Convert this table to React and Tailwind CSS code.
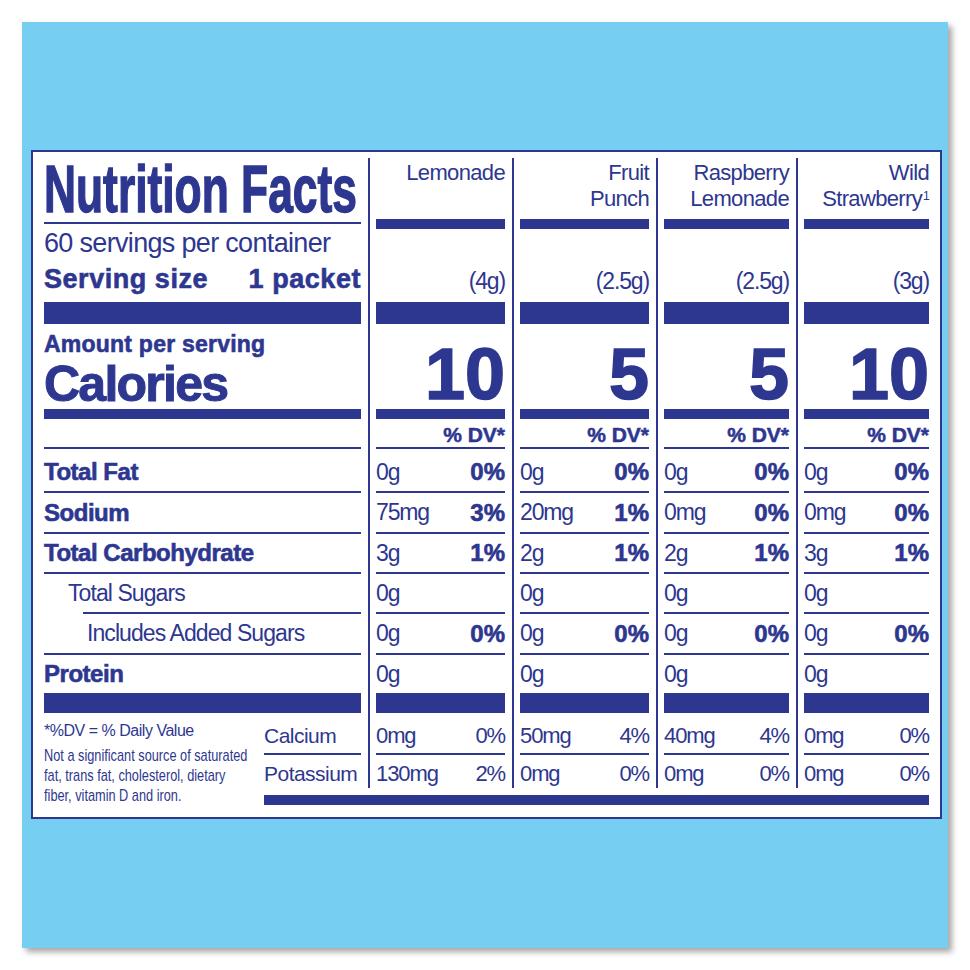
import React from 'react';

const columns = [
  {
    name: ['Lemonade'],
    size: '(4g)',
    cal: '10',
    rows: [['0g', '0%'], ['75mg', '3%'], ['3g', '1%'], ['0g', ''], ['0g', '0%'], ['0g', '']],
    minerals: [['0mg', '0%'], ['130mg', '2%']],
  },
  {
    name: ['Fruit', 'Punch'],
    size: '(2.5g)',
    cal: '5',
    rows: [['0g', '0%'], ['20mg', '1%'], ['2g', '1%'], ['0g', ''], ['0g', '0%'], ['0g', '']],
    minerals: [['50mg', '4%'], ['0mg', '0%']],
  },
  {
    name: ['Raspberry', 'Lemonade'],
    size: '(2.5g)',
    cal: '5',
    rows: [['0g', '0%'], ['0mg', '0%'], ['2g', '1%'], ['0g', ''], ['0g', '0%'], ['0g', '']],
    minerals: [['40mg', '4%'], ['0mg', '0%']],
  },
  {
    name: ['Wild', 'Strawberry'],
    sup: '1',
    size: '(3g)',
    cal: '10',
    rows: [['0g', '0%'], ['0mg', '0%'], ['3g', '1%'], ['0g', ''], ['0g', '0%'], ['0g', '']],
    minerals: [['0mg', '0%'], ['0mg', '0%']],
  },
];

const nutrients = [
  { label: 'Total Fat', bold: true, h: 'h-[42px] leading-[46px]', pad: '' },
  { label: 'Sodium', bold: true, h: 'h-[39px] leading-[39px]', pad: '' },
  { label: 'Total Carbohydrate', bold: true, h: 'h-[38px] leading-[38px]', pad: '' },
  { label: 'Total Sugars', bold: false, h: 'h-[38px] leading-[38px]', pad: 'pl-[24px]' },
  { label: 'Includes Added Sugars', bold: false, h: 'h-[39px] leading-[39px]', pad: 'pl-[43px]' },
  { label: 'Protein', bold: true, h: 'h-[38px] leading-[38px]', pad: '' },
];

const gridTop = 'grid grid-cols-[335px_144px_144px_140px_144px]';
const gridBottom = 'grid grid-cols-[104px_144px_144px_140px_144px]';
const valCell = [
  'border-l-2 border-[#2e3790] pl-[6px] pr-[7px]',
  'border-l-2 border-[#2e3790] pl-[6px] pr-[7px]',
  'border-l-2 border-[#2e3790] pl-[6px] pr-[7px]',
  'border-l-2 border-[#2e3790] pl-[6px] pr-[11px]',
];

const Bar = ({ className = '' }) => <div className={`h-full bg-[#2e3790] ${className}`} />;

const Row = ({ grid = gridTop, leftPad = 'pl-[11px] pr-[7px]', className = '', left, cell }) => (
  <div className={grid}>
    <div className={`${leftPad} ${className}`}>{left}</div>
    {columns.map((c, i) => (
      <div key={i} className={`${valCell[i]} ${className}`}>
        {cell(c, i)}
      </div>
    ))}
  </div>
);

const App = () => {
  return (
    <div className="h-[970px] w-[970px] bg-white pl-[22px] pt-[22px] font-['Liberation_Sans',Arial,sans-serif]">
      <div className="h-[926px] w-[926px] bg-[#76cef3] pl-[9px] pt-[128px] shadow-[4px_4px_6px_rgba(0,0,0,0.35)]">
        <div className="w-[911px] border-2 border-[#2e3790] bg-white pb-[11px] pt-[6px] text-[#2e3790]">
          {/* header */}
          <Row
            className="h-[144px]"
            left={
              <>
                <div className="h-[62px] whitespace-nowrap text-[67px] font-bold leading-[62px]">
                  <span className="inline-block origin-left scale-x-[0.662] [-webkit-text-stroke:1.5px_#2e3790]">
                    Nutrition Facts
                  </span>
                </div>
                <div className="mt-[2px] h-[2px] bg-[#2e3790]" />
                <div className="whitespace-nowrap text-[27px] leading-[39px] tracking-[-0.025em]">
                  60 servings per container
                </div>
                <div className="flex justify-between whitespace-nowrap text-[27px] font-bold leading-[32px] tracking-[0.02em] [-webkit-text-stroke:0.6px_#2e3790]">
                  <span>Serving size</span>
                  <span>1 packet</span>
                </div>
              </>
            }
            cell={(c) => (
              <div className="flex flex-col">
                <div className="h-[61px] pt-[2px] text-right text-[22px] leading-[26px] tracking-[-0.03em]">
                  {c.name.map((n, j) => (
                    <div key={j}>
                      {n}
                      {c.sup && j === c.name.length - 1 && (
                        <sup className="ml-[1px] text-[12px]">{c.sup}</sup>
                      )}
                    </div>
                  ))}
                </div>
                <div className="h-[10px] bg-[#2e3790]" />
                <div className="mt-[40px] text-right text-[23px] leading-[24px] tracking-[-0.05em]">{c.size}</div>
              </div>
            )}
          />
          <Row className="h-[22px]" left={<Bar />} cell={() => <Bar />} />

          {/* calories */}
          <Row
            className="h-[85px]"
            left={
              <>
                <div className="whitespace-nowrap text-[23px] font-bold leading-[40px] tracking-[0.01em] [-webkit-text-stroke:0.6px_#2e3790]">
                  Amount per serving
                </div>
                <div className="whitespace-nowrap text-[50px] font-bold leading-[40px] tracking-[-0.035em] [-webkit-text-stroke:1px_#2e3790]">
                  Calories
                </div>
              </>
            }
            cell={(c) => (
              <div className="pt-[14px] text-right text-[72px] font-bold leading-[72px] [-webkit-text-stroke:1.5px_#2e3790]">
                {c.cal}
              </div>
            )}
          />
          <Row className="h-[10px]" left={<Bar />} cell={() => <Bar />} />

          {/* % DV */}
          <Row
            className="h-[28px]"
            left={null}
            cell={() => (
              <div className="text-right text-[21px] font-bold leading-[32px] [-webkit-text-stroke:0.5px_#2e3790]">
                % DV*
              </div>
            )}
          />
          <Row className="h-[2px]" left={<Bar />} cell={() => <Bar />} />

          {nutrients.map((n, k) => (
            <React.Fragment key={n.label}>
              <Row
                className={n.h}
                left={
                  <div
                    className={`${n.pad} whitespace-nowrap ${
                      n.bold
                        ? 'text-[24px] font-bold tracking-[-0.02em] [-webkit-text-stroke:0.6px_#2e3790]'
                        : 'text-[23px] tracking-[-0.04em]'
                    }`}
                  >
                    {n.label}
                  </div>
                }
                cell={(c) => (
                  <div className="flex justify-between whitespace-nowrap">
                    <span className="text-[23px] tracking-[-0.05em]">{c.rows[k][0]}</span>
                    <span className="text-[24px] font-bold [-webkit-text-stroke:0.6px_#2e3790]">{c.rows[k][1]}</span>
                  </div>
                )}
              />
              {k < nutrients.length - 1 ? (
                <Row
                  className="h-[2px]"
                  left={<Bar className={k === 3 ? 'ml-[39px]' : ''} />}
                  cell={() => <Bar />}
                />
              ) : (
                <Row className="h-[20px]" left={<Bar />} cell={() => <Bar />} />
              )}
            </React.Fragment>
          ))}

          {/* footnote + minerals */}
          <div className="flex">
            <div className="w-[231px] shrink-0 pl-[11px] pt-[8px]">
              <div className="whitespace-nowrap text-[16px] leading-[20px] tracking-[-0.03em]">*%DV = % Daily Value</div>
              <div className="mt-[5px] w-[280px] origin-top-left scale-x-[0.75] whitespace-nowrap text-[17px] leading-[20px]">
                Not a significant source of saturated
                <br />
                fat, trans fat, cholesterol, dietary
                <br />
                fiber, vitamin D and iron.
              </div>
            </div>
            <div className="w-[676px] shrink-0">
              {['Calcium', 'Potassium'].map((m, k) => (
                <React.Fragment key={m}>
                  <Row
                    grid={gridBottom}
                    leftPad="pr-[7px]"
                    className={k === 0 ? 'h-[40px] pt-[6px] leading-[34px]' : 'h-[33px] pt-[5px] leading-[28px]'}
                    left={<div className="whitespace-nowrap text-[21px] tracking-[-0.025em]">{m}</div>}
                    cell={(c) => (
                      <div className="flex justify-between whitespace-nowrap text-[22px] tracking-[-0.05em]">
                        <span>{c.minerals[k][0]}</span>
                        <span>{c.minerals[k][1]}</span>
                      </div>
                    )}
                  />
                  {k === 0 && (
                    <Row grid={gridBottom} leftPad="pr-[7px]" className="h-[2px]" left={<Bar />} cell={() => <Bar />} />
                  )}
                </React.Fragment>
              ))}
              <div className="mr-[11px] mt-[7px] h-[10px] bg-[#2e3790]" />
            </div>
          </div>
        </div>
      </div>
    </div>
  );
};

export default App;
